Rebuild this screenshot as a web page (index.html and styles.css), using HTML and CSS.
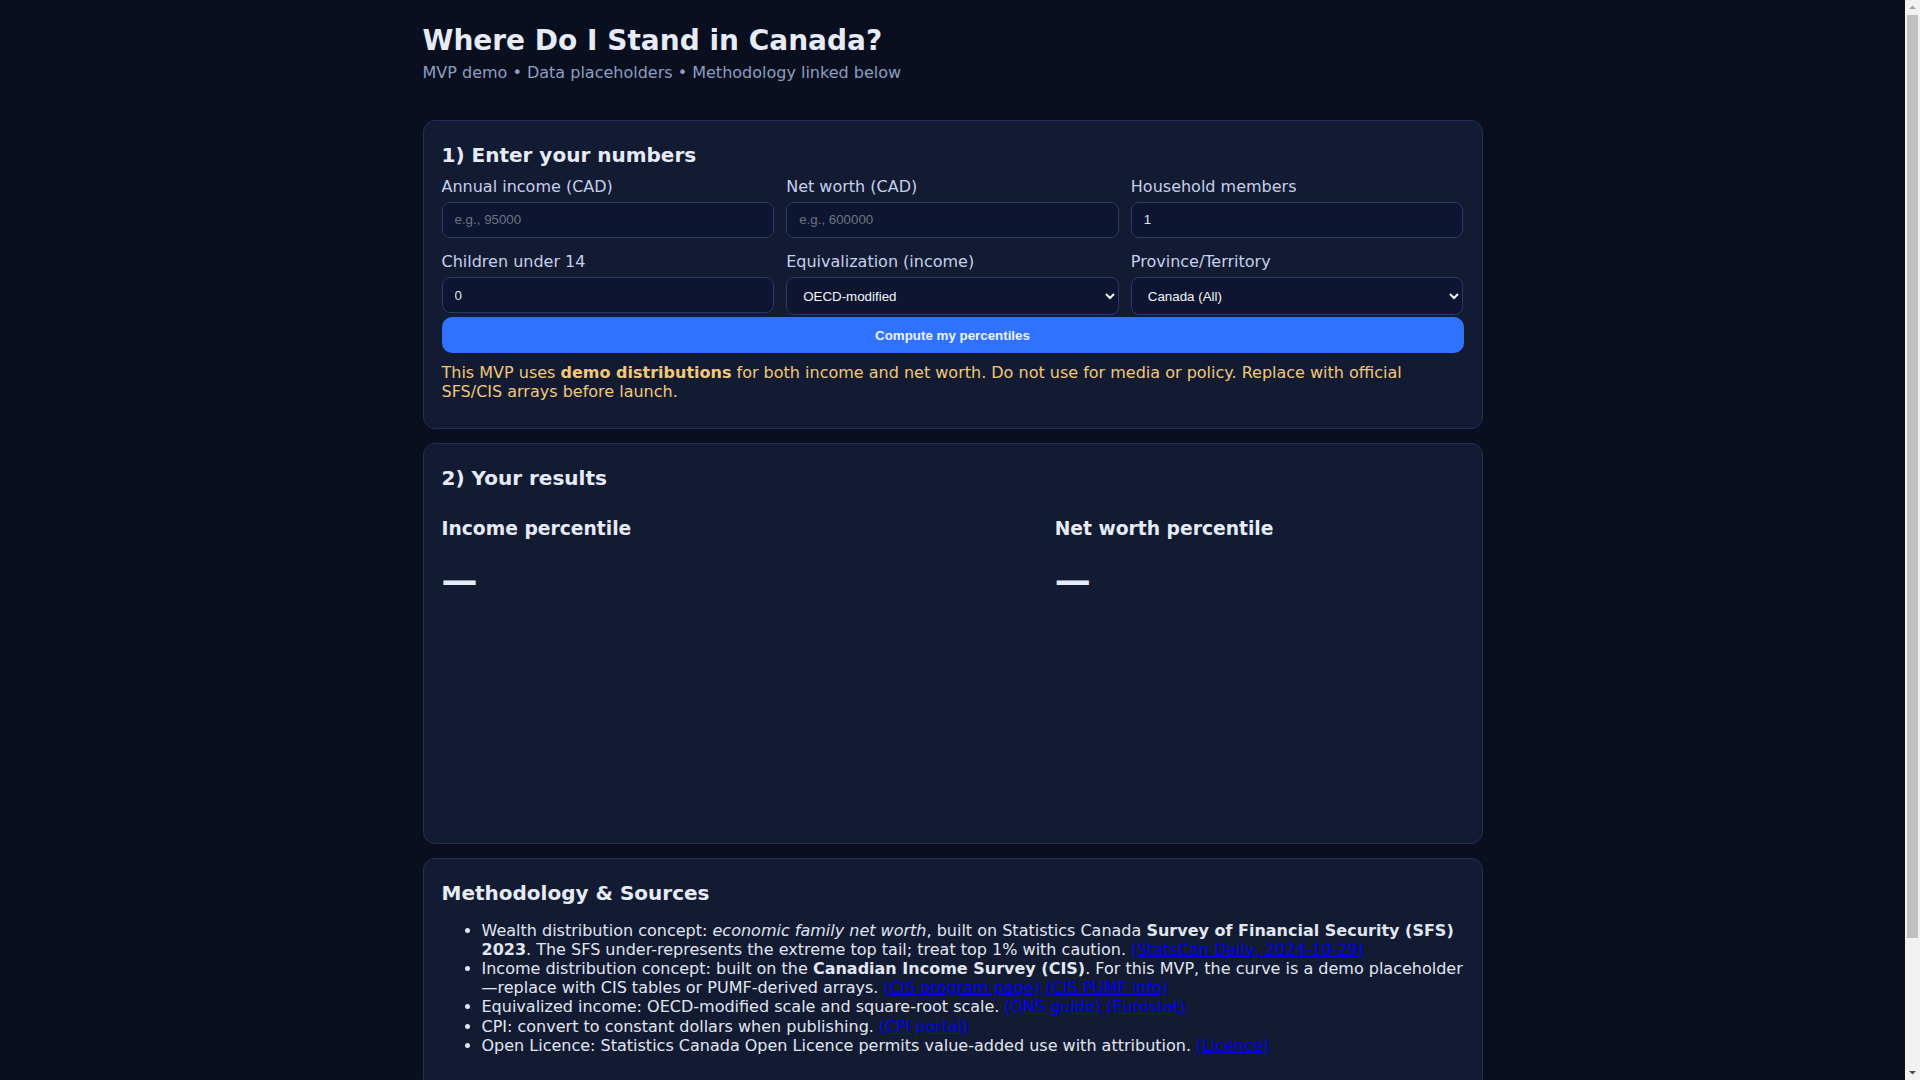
FILE: index.html
```html
<!DOCTYPE html>
<html lang="en">
<head>
    <meta charset="UTF-8">
    <meta name="viewport" content="width=device-width, initial-scale=1.0">
    <title>Where Do I Stand in Canada?</title>
    <link rel="stylesheet" href="styles.css">
</head>
<body>
    <div class="page">
        <header class="top">
            <h1>Where Do I Stand in Canada?</h1>
            <p class="sub">MVP demo • Data placeholders • Methodology linked below</p>
        </header>

        <section class="card">
            <h2>1) Enter your numbers</h2>
            <div class="form-grid">
                <label class="field">Annual income (CAD)
                    <input type="number" id="income" placeholder="e.g., 95000">
                </label>
                <label class="field">Net worth (CAD)
                    <input type="number" id="networth" placeholder="e.g., 600000">
                </label>
                <label class="field">Household members
                    <input type="number" id="members" value="1">
                </label>
                <label class="field">Children under 14
                    <input type="number" id="kids" value="0">
                </label>
                <label class="field">Equivalization (income)
                    <select id="equiv">
                        <option>OECD-modified</option>
                        <option>Square-root</option>
                        <option>None</option>
                    </select>
                </label>
                <label class="field">Province/Territory
                    <select id="prov">
                        <option>Canada (All)</option>
                        <option>Ontario</option>
                        <option>Quebec</option>
                        <option>British Columbia</option>
                        <option>Alberta</option>
                    </select>
                </label>
            </div>
            <button class="compute" id="compute">Compute my percentiles</button>
            <p class="warn">This MVP uses <strong>demo distributions</strong> for both income and net worth. Do not use for media or policy. Replace with official SFS/CIS arrays before launch.</p>
        </section>

        <section class="card">
            <h2>2) Your results</h2>
            <div class="results">
                <div class="result">
                    <h3>Income percentile</h3>
                    <div class="big" id="incomePct">—</div>
                    <div class="chart"></div>
                </div>
                <div class="result">
                    <h3>Net worth percentile</h3>
                    <div class="big" id="worthPct">—</div>
                </div>
            </div>
        </section>

        <section class="card">
            <h2>Methodology &amp; Sources</h2>
            <ul class="sources">
                <li>Wealth distribution concept: <em>economic family net worth</em>, built on Statistics Canada <strong>Survey of Financial Security (SFS) 2023</strong>. The SFS under-represents the extreme top tail; treat top 1% with caution. <a href="#">(StatsCan Daily, 2024-10-29)</a></li>
                <li>Income distribution concept: built on the <strong>Canadian Income Survey (CIS)</strong>. For this MVP, the curve is a demo placeholder—replace with CIS tables or PUMF-derived arrays. <a href="#">(CIS program page)</a> <a href="#">(CIS PUMF info)</a></li>
                <li>Equivalized income: OECD-modified scale and square-root scale. <a href="#">(ONS guide)</a> <a href="#">(Eurostat)</a></li>
                <li>CPI: convert to constant dollars when publishing. <a href="#">(CPI portal)</a></li>
                <li>Open Licence: Statistics Canada Open Licence permits value-added use with attribution. <a href="#">(Licence)</a></li>
            </ul>
        </section>
    </div>

    <!-- window scrollbar as it shows in the capture -->
    <div class="scrollbar">
        <svg class="arrow up" width="15" height="15" viewBox="0 0 15 15"><path d="M4 9 L7.5 5.5 L11 9 Z" fill="#a3a3a3"/></svg>
        <div class="thumb"></div>
        <svg class="arrow down" width="15" height="15" viewBox="0 0 15 15"><path d="M4 6 L7.5 9.5 L11 6 Z" fill="#505050"/></svg>
    </div>
</body>
</html>
```

FILE: styles.css
```css
body {
    margin: 0;
    padding-right: 15px;
    background-color: #0a0f1f;
    color: #e3e8f4;
    font-family: "DejaVu Sans", sans-serif;
    font-size: 16px;
    line-height: 1.2;
}
.page {
    max-width: 1060px;
    margin: 0 auto;
    padding: 24px 0 136px;
}
.top {
    margin-bottom: 38px;
}
h1 {
    margin: 0;
    font-size: 28px;
    color: #e6ebf8;
}
.sub {
    margin: 5px 0 0;
    color: #8d9dc0;
}
.card {
    background: #131b33;
    border: 1px solid #223058;
    border-radius: 12px;
    padding: 18px;
    margin-bottom: 14px;
}
h2 {
    margin: 4px 0 10px;
    font-size: 20px;
    color: #e6ebf8;
}
.form-grid {
    display: grid;
    grid-template-columns: repeat(3, 1fr);
    gap: 14px 12px;
}
.field {
    display: flex;
    flex-direction: column;
    gap: 6px;
    color: #c5d0ea;
}
input,
select {
    box-sizing: border-box;
    height: 36px;
    font-family: "Liberation Sans", Arial, sans-serif;
    font-size: 13.33px;
    background: #0e1530;
    color: #dfe6f5;
    border: 1px solid #2a3a66;
    border-radius: 8px;
    padding: 0 12px;
}
input::placeholder {
    color: #6c7385;
}
select {
    height: 38px;
    color: #f2f5fb;
}
.compute {
    display: block;
    width: 100%;
    margin-top: 2px;
    height: 36px;
    background-color: #2f72ff;
    color: #eef2ff;
    border: none;
    border-radius: 10px;
    font-family: "Liberation Sans", Arial, sans-serif;
    font-size: 13.33px;
    font-weight: bold;
    cursor: pointer;
}
.warn {
    margin: 10px 0 8px;
    color: #f1c878;
}
.results {
    display: grid;
    grid-template-columns: 3fr 2fr;
}
h3 {
    color: #e6ebf8;
}
.big {
    font-size: 36px;
    font-weight: bold;
    color: #e6ebf8;
}
.chart {
    height: 222px;
}
.sources {
    margin: 16px 0;
    color: #e0e6f2;
}
.scrollbar {
    position: fixed;
    top: 0;
    right: 0;
    width: 15px;
    height: 100vh;
    background: #f1f1f1;
}
.scrollbar .arrow {
    position: absolute;
    left: 0;
}
.scrollbar .up {
    top: 0;
}
.scrollbar .down {
    bottom: 0;
}
.scrollbar .thumb {
    position: absolute;
    top: 15px;
    left: 2px;
    right: 2px;
    height: 923px;
    background: #c1c1c1;
}
```
